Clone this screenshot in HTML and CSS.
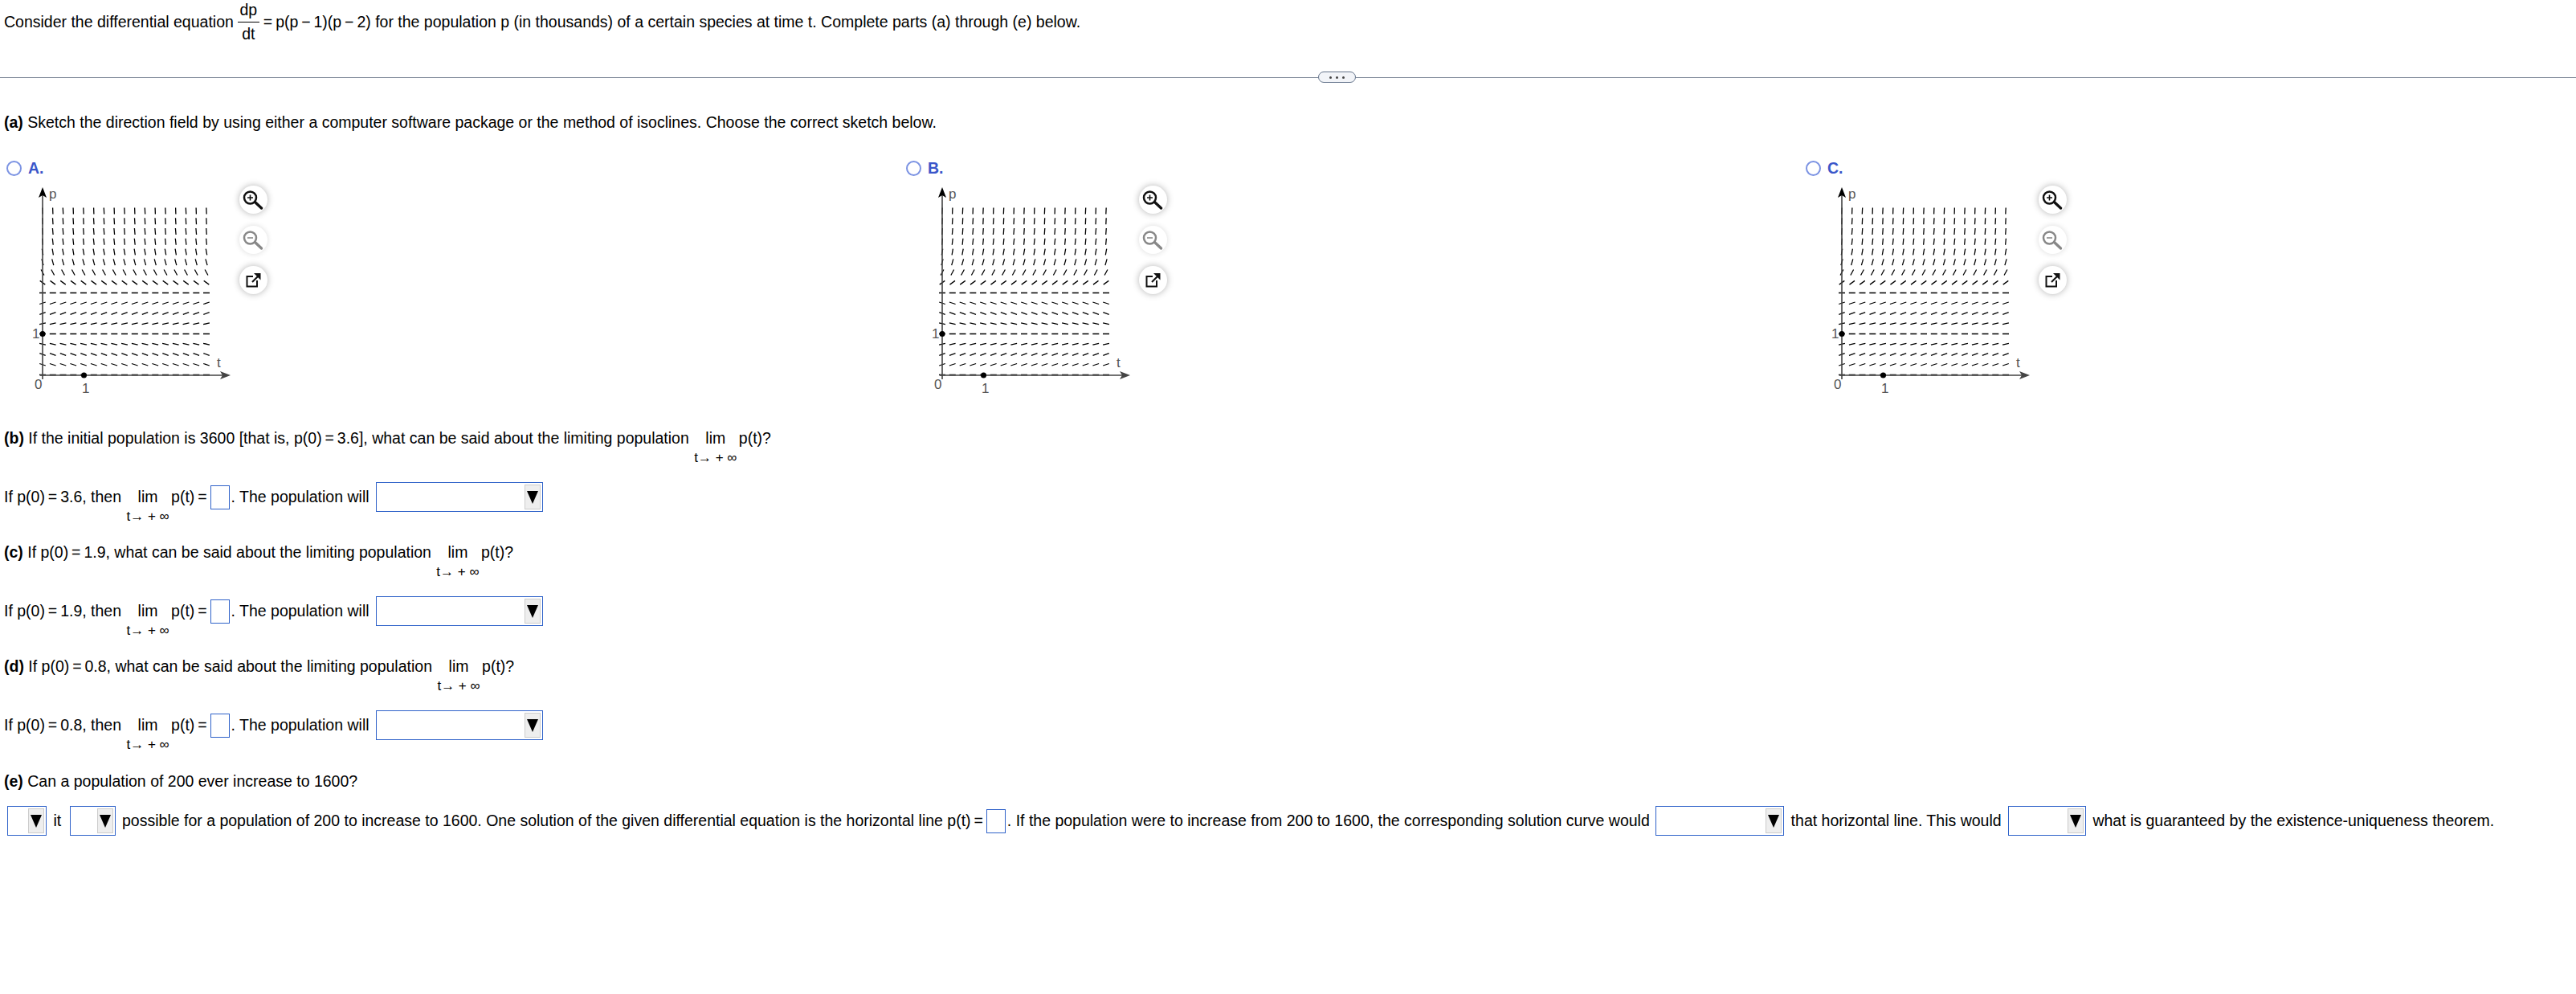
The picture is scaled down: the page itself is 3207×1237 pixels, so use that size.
FILE: index.html
```html
<!DOCTYPE html>
<html lang="en">
<head>
    <meta charset="UTF-8">
    <title>Differential equation question</title>
    <link rel="stylesheet" href="styles.css">
</head>
<body>
    <svg class="defs" width="0" height="0">
        <symbol id="zoom-in" viewBox="0 0 35 35">
            <circle cx="13.5" cy="15" r="7.5" fill="none" stroke="currentColor" stroke-width="2.5"/>
            <path d="M19.5 20.5 L27.5 28" stroke="currentColor" stroke-width="3.4" stroke-linecap="round"/>
            <path d="M10 15 H17 M13.5 11.5 V18.5" stroke="currentColor" stroke-width="1.6"/>
        </symbol>
        <symbol id="zoom-out" viewBox="0 0 35 35">
            <circle cx="13.5" cy="15" r="7.5" fill="none" stroke="currentColor" stroke-width="2.5"/>
            <path d="M19.5 20.5 L27.5 28" stroke="currentColor" stroke-width="3.4" stroke-linecap="round"/>
            <path d="M10 15 H17" stroke="currentColor" stroke-width="1.6"/>
        </symbol>
        <symbol id="popout" viewBox="0 0 35 35">
            <path d="M17 13 H9.5 V25.5 H22 V18" fill="none" stroke="currentColor" stroke-width="2"/>
            <path d="M16 20 L24 12" stroke="currentColor" stroke-width="2.2"/>
            <path d="M18 9 H26.5 V17.5 Z" fill="currentColor"/>
        </symbol>
    </svg>

    <div class="intro">
        <span>Consider the differential equation</span>
        <span class="frac"><span>dp</span><span class="frac-bottom">dt</span></span>
        <span>=&thinsp;p(p&thinsp;−&thinsp;1)(p&thinsp;−&thinsp;2) for the population p (in thousands) of a certain species at time t. Complete parts (a) through (e) below.</span>
    </div>

    <div class="divider">
        <div class="rule rule-left"></div>
        <div class="more"><i></i><i></i><i></i></div>
        <div class="rule"></div>
    </div>

    <p class="q q-first"><b>(a)</b> Sketch the direction field by using either a computer software package or the method of isoclines. Choose the correct sketch below.</p>

    <div class="choices">
        <div class="choice">
            <div class="choice-head"><span class="radio"></span><b>A.</b></div>
            <div class="choice-body">
                <svg class="plot" data-mode="A" width="260" height="272" viewBox="0 0 260 272">
                    <g class="field"></g>
                    <path class="axis" d="M13 247 V15 M10 242 H240"/>
                    <path class="head-y" d="M13 8 L18 21 L13 18 L8 21 Z"/>
                    <path class="head-x" d="M247 242 L234 237 L237 242 L234 247 Z"/>
                    <circle cx="13" cy="190.5" r="3.5"/>
                    <circle cx="64.5" cy="242" r="3.5"/>
                    <text x="21" y="22">p</text>
                    <text x="230" y="232">t</text>
                    <text x="3" y="259">0</text>
                    <text x="0" y="196">1</text>
                    <text x="62" y="264">1</text>
                </svg>
                <div class="tools">
                    <span class="tool"><svg><use href="#zoom-in"/></svg></span>
                    <span class="tool tool-off"><svg><use href="#zoom-out"/></svg></span>
                    <span class="tool"><svg><use href="#popout"/></svg></span>
                </div>
            </div>
        </div>
        <div class="choice">
            <div class="choice-head"><span class="radio"></span><b>B.</b></div>
            <div class="choice-body">
                <svg class="plot" data-mode="B" width="260" height="272" viewBox="0 0 260 272">
                    <g class="field"></g>
                    <path class="axis" d="M13 247 V15 M10 242 H240"/>
                    <path class="head-y" d="M13 8 L18 21 L13 18 L8 21 Z"/>
                    <path class="head-x" d="M247 242 L234 237 L237 242 L234 247 Z"/>
                    <circle cx="13" cy="190.5" r="3.5"/>
                    <circle cx="64.5" cy="242" r="3.5"/>
                    <text x="21" y="22">p</text>
                    <text x="230" y="232">t</text>
                    <text x="3" y="259">0</text>
                    <text x="0" y="196">1</text>
                    <text x="62" y="264">1</text>
                </svg>
                <div class="tools">
                    <span class="tool"><svg><use href="#zoom-in"/></svg></span>
                    <span class="tool tool-off"><svg><use href="#zoom-out"/></svg></span>
                    <span class="tool"><svg><use href="#popout"/></svg></span>
                </div>
            </div>
        </div>
        <div class="choice">
            <div class="choice-head"><span class="radio"></span><b>C.</b></div>
            <div class="choice-body">
                <svg class="plot" data-mode="C" width="260" height="272" viewBox="0 0 260 272">
                    <g class="field"></g>
                    <path class="axis" d="M13 247 V15 M10 242 H240"/>
                    <path class="head-y" d="M13 8 L18 21 L13 18 L8 21 Z"/>
                    <path class="head-x" d="M247 242 L234 237 L237 242 L234 247 Z"/>
                    <circle cx="13" cy="190.5" r="3.5"/>
                    <circle cx="64.5" cy="242" r="3.5"/>
                    <text x="21" y="22">p</text>
                    <text x="230" y="232">t</text>
                    <text x="3" y="259">0</text>
                    <text x="0" y="196">1</text>
                    <text x="62" y="264">1</text>
                </svg>
                <div class="tools">
                    <span class="tool"><svg><use href="#zoom-in"/></svg></span>
                    <span class="tool tool-off"><svg><use href="#zoom-out"/></svg></span>
                    <span class="tool"><svg><use href="#popout"/></svg></span>
                </div>
            </div>
        </div>
    </div>

    <p class="q q-b"><b>(b)</b> If the initial population is 3600 [that is, p(0)&thinsp;=&thinsp;3.6], what can be said about the limiting population <span class="lim"><span>lim</span><span class="lim-sub">t→ + ∞</span></span> p(t)?</p>
    <p class="a">If p(0)&thinsp;=&thinsp;3.6, then <span class="lim"><span>lim</span><span class="lim-sub">t→ + ∞</span></span> p(t)&thinsp;=&thinsp;<input class="box" type="text">. The population will <span class="drop"><span class="drop-btn"></span></span></p>

    <p class="q"><b>(c)</b> If p(0)&thinsp;=&thinsp;1.9, what can be said about the limiting population <span class="lim"><span>lim</span><span class="lim-sub">t→ + ∞</span></span> p(t)?</p>
    <p class="a">If p(0)&thinsp;=&thinsp;1.9, then <span class="lim"><span>lim</span><span class="lim-sub">t→ + ∞</span></span> p(t)&thinsp;=&thinsp;<input class="box" type="text">. The population will <span class="drop"><span class="drop-btn"></span></span></p>

    <p class="q"><b>(d)</b> If p(0)&thinsp;=&thinsp;0.8, what can be said about the limiting population <span class="lim"><span>lim</span><span class="lim-sub">t→ + ∞</span></span> p(t)?</p>
    <p class="a">If p(0)&thinsp;=&thinsp;0.8, then <span class="lim"><span>lim</span><span class="lim-sub">t→ + ∞</span></span> p(t)&thinsp;=&thinsp;<input class="box" type="text">. The population will <span class="drop"><span class="drop-btn"></span></span></p>

    <p class="q q-e"><b>(e)</b> Can a population of 200 ever increase to 1600?</p>
    <p class="a a-wide"><span class="drop drop-s"><span class="drop-btn"></span></span> it <span class="drop drop-m"><span class="drop-btn"></span></span> possible for a population of 200 to increase to 1600. One solution of the given differential equation is the horizontal line p(t)&thinsp;=&thinsp;<input class="box" type="text">. If the population were to increase from 200 to 1600, the corresponding solution curve would <span class="drop drop-l"><span class="drop-btn"></span></span> that horizontal line. This would <span class="drop drop-xl"><span class="drop-btn"></span></span> what is guaranteed by the existence-uniqueness theorem.</p>

    <script src="plots.js"></script>
</body>
</html>
```

FILE: styles.css
```css
body {
    margin: 0;
    font-family: "Liberation Sans", Arial, sans-serif;
    font-size: 19.5px;
    line-height: 20px;
    color: #000;
    background: #fff;
    overflow-x: hidden;
}

p {
    margin: 0;
}

.defs {
    position: absolute;
}

.intro {
    display: flex;
    align-items: center;
    gap: 5px;
    height: 54px;
    padding-left: 5px;
}

.frac {
    display: flex;
    flex-direction: column;
    align-items: center;
    width: 27px;
}

.frac-bottom {
    border-top: 1px solid #000;
    width: 100%;
    text-align: center;
    margin-top: 5px;
    padding-top: 4px;
}

.divider {
    display: flex;
    align-items: center;
    margin-top: 35px;
    height: 14px;
}

.rule {
    flex: 1;
    height: 1px;
    background: #87909f;
}

.rule-left {
    flex: none;
    width: 1641px;
}

.more {
    display: flex;
    align-items: center;
    justify-content: center;
    gap: 5px;
    width: 47px;
    height: 14px;
    box-sizing: border-box;
    border: 1px solid #64748b;
    border-radius: 7px;
    background: #f2f4f8;
}

.more i {
    width: 3px;
    height: 3px;
    border-radius: 50%;
    background: #444;
}

.q {
    height: 20px;
    margin-top: 40px;
    margin-bottom: 45px;
    padding-left: 5px;
}

.q-first {
    margin-top: 39px;
    margin-bottom: 33px;
}

.q-b {
    margin-top: 38px;
}

.q-e {
    margin-top: 41px;
    margin-bottom: 21px;
}

.a {
    height: 37px;
    padding-left: 5px;
    white-space: nowrap;
}

.a-wide {
    padding-left: 6px;
}

.choices {
    display: grid;
    grid-template-columns: repeat(3, 1120px);
}

.choice-head {
    display: flex;
    align-items: center;
    gap: 8px;
    height: 28px;
    padding-left: 8px;
    color: #3a56c9;
}

.radio {
    width: 19px;
    height: 19px;
    box-sizing: border-box;
    border: 2px solid #7c93e3;
    border-radius: 50%;
}

.choice-body {
    display: flex;
    margin-top: 2px;
    padding-left: 40px;
}

.plot {
    flex: none;
    margin-right: -2px;
}

.plot text {
    font-size: 17px;
    fill: #555;
}

.axis {
    fill: none;
    stroke: #444;
    stroke-width: 1.6;
}

.head-y {
    fill: #000;
}

.head-x {
    fill: #444;
}

.field path {
    fill: none;
    stroke: #000;
    stroke-width: 1.3;
}

.tools {
    display: flex;
    flex-direction: column;
    gap: 15px;
    margin-top: 6px;
}

.tool {
    width: 35px;
    height: 35px;
    border-radius: 50%;
    background: #fff;
    color: #111;
    box-shadow: 0 0 8px rgba(0, 0, 0, 0.3);
}

.tool svg {
    display: block;
    width: 35px;
    height: 35px;
}

.tool-off {
    color: #888;
    box-shadow: 0 0 7px rgba(0, 0, 0, 0.15);
}

.lim {
    display: inline-flex;
    flex-direction: column;
    align-items: center;
    margin: 0 -3px 0 1px;
}

.lim-sub {
    margin-top: 7px;
    font-size: 17px;
    line-height: 16px;
    white-space: nowrap;
}

.box {
    box-sizing: border-box;
    width: 24px;
    height: 30px;
    margin: 0 2px 2px 0;
    padding: 0;
    border: 1px solid #2f62c9;
    background: #fff;
    vertical-align: middle;
}

.drop {
    display: inline-flex;
    justify-content: flex-end;
    align-items: center;
    box-sizing: border-box;
    width: 208px;
    height: 37px;
    margin: 0 3px 2px;
    padding-right: 2px;
    border: 1px solid #2f62c9;
    background: #fff;
    vertical-align: middle;
}

.drop-s {
    width: 49px;
}

.drop-m {
    width: 57px;
    margin-left: 5px;
}

.drop-l {
    width: 160px;
    margin-left: 2px;
}

.drop-xl {
    width: 97px;
}

.drop-btn {
    display: flex;
    align-items: center;
    justify-content: center;
    box-sizing: border-box;
    width: 20px;
    height: 31px;
    border: 1px solid #ccc;
    background: #eee;
}

.drop-btn::before {
    content: "";
    border-left: 7px solid transparent;
    border-right: 7px solid transparent;
    border-top: 16px solid #000;
}
```

FILE: plots.js
```js
// direction fields for the three sketches, p' = p(p-1)(p-2)
const ORIGIN_X = 13;
const ORIGIN_Y = 242;
const STEP = 12.75;
const DASH = 8;

function slope(p, mode) {
    const f = p * (p - 1) * (p - 2);
    if (mode === "A") return -f;
    if (mode === "C") return Math.abs(f);
    return f;
}

document.querySelectorAll(".plot").forEach((plot) => {
    let d = "";
    for (let row = 0; row <= 16; row++) {
        const s = slope(row * 0.25, plot.dataset.mode);
        const dx = (DASH / 2) * Math.cos(Math.atan(s));
        const dy = (DASH / 2) * Math.sin(Math.atan(s));
        for (let col = 0; col <= 16; col++) {
            const x = ORIGIN_X + col * STEP;
            const y = ORIGIN_Y - row * STEP - 0.5;
            d += `M${(x - dx).toFixed(1)} ${(y + dy).toFixed(1)}L${(x + dx).toFixed(1)} ${(y - dy).toFixed(1)}`;
        }
    }
    const path = document.createElementNS("http://www.w3.org/2000/svg", "path");
    path.setAttribute("d", d);
    plot.querySelector(".field").appendChild(path);
});
```
